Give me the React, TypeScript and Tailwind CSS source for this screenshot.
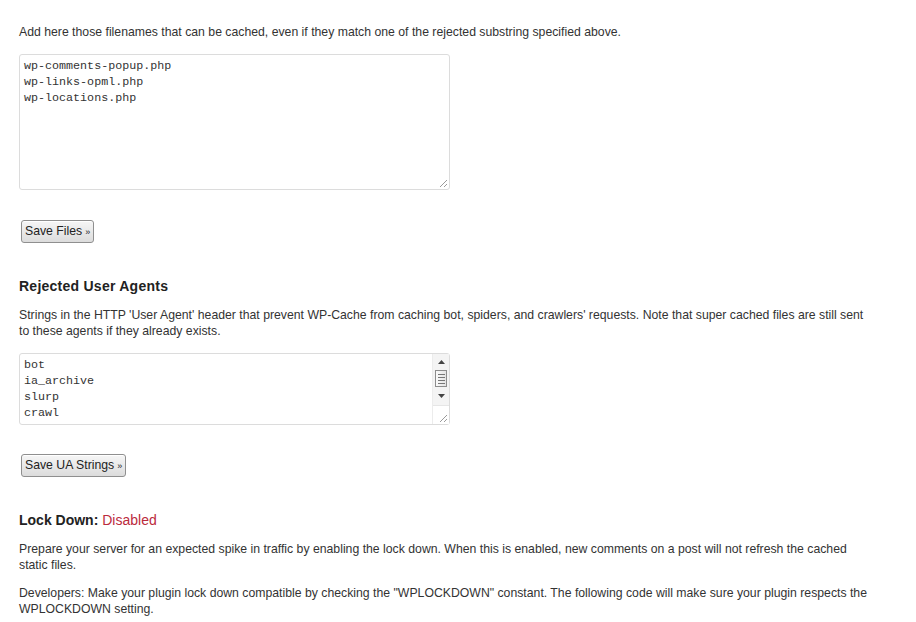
import React from 'react';

const sans = { fontFamily: '"Liberation Sans", Arial, sans-serif' };
const mono = { fontFamily: '"Liberation Mono", "DejaVu Sans Mono", monospace' };

function Grip() {
  return (
    <svg width="9" height="9" viewBox="0 0 9 9" className="block">
      <line x1="8" y1="1" x2="1" y2="8" stroke="#9a9a9a" strokeWidth="1" />
      <line x1="8" y1="5" x2="5" y2="8" stroke="#9a9a9a" strokeWidth="1" />
    </svg>
  );
}

function Button({ label }: { label: string }) {
  return (
    <button
      type="button"
      className="h-[23px] px-[3px] rounded-[3px] border border-[#8f8f8f] bg-gradient-to-b from-[#f6f6f6] to-[#dcdcdc] text-[12.25px] text-[#222] leading-none flex items-center gap-[3px] shadow-[inset_0_1px_0_#fff]"
      style={sans}
    >
      {label}
      <span className="text-[9px] mt-[2px]">»</span>
    </button>
  );
}

function TextBox({ lines, height, scroll }: { lines: string[]; height: number; scroll?: boolean }) {
  return (
    <div
      className="w-[431px] border border-[#dcdcdc] rounded-[3px] bg-white flex"
      style={{ height }}
    >
      <div
        className="flex-1 px-[4px] pt-[3px] text-[11.7px] leading-[16px] text-[#333] whitespace-pre overflow-hidden"
        style={mono}
      >
        {lines.join('\n')}
      </div>
      {scroll ? (
        <div className="w-[17px] flex flex-col bg-[#f4f4f4] border-l border-[#ececec]">
          <div className="h-[16px] flex items-center justify-center">
            <svg width="7" height="4" viewBox="0 0 7 4"><path d="M0 4 L3.5 0 L7 4 Z" fill="#444" /></svg>
          </div>
          <div className="mx-[2px] h-[17px] border border-[#8d8d8d] bg-gradient-to-r from-[#fafafa] to-[#e4e4e4] flex flex-col items-center justify-center gap-[2px]">
            <div className="w-[7px] h-px bg-[#777]" />
            <div className="w-[7px] h-px bg-[#777]" />
            <div className="w-[7px] h-px bg-[#777]" />
            <div className="w-[7px] h-px bg-[#777]" />
          </div>
          <div className="h-[18px] flex items-center justify-center">
            <svg width="7" height="4" viewBox="0 0 7 4"><path d="M0 0 L3.5 4 L7 0 Z" fill="#444" /></svg>
          </div>
          <div className="flex-1 bg-white border-t border-[#e6e6e6] flex items-end justify-end pr-[1px] pb-[1px]">
            <Grip />
          </div>
        </div>
      ) : (
        <div className="flex items-end pr-[1px] pb-[1px]">
          <Grip />
        </div>
      )}
    </div>
  );
}

export default function App() {
  return (
    <div className="w-[916px] h-[622px] bg-white pl-[19px] pr-[44px] text-[12.25px] text-[#333] overflow-hidden" style={sans}>
      <p className="pt-[24px] leading-[16px]">
        Add here those filenames that can be cached, even if they match one of the rejected substring specified above.
      </p>

      <div className="mt-[14px]">
        <TextBox height={136} lines={['wp-comments-popup.php', 'wp-links-opml.php', 'wp-locations.php']} />
      </div>

      <div className="mt-[30px] ml-[2px]">
        <Button label="Save Files" />
      </div>

      <h3 className="mt-[34px] text-[14px] font-bold text-[#222] leading-[18px] tracking-[0.25px]">Rejected User Agents</h3>

      <p className="mt-[12px] leading-[16px]">
        Strings in the HTTP 'User Agent' header that prevent WP-Cache from caching bot, spiders, and crawlers' requests. Note that super cached files are still sent to these agents if they already exists.
      </p>

      <div className="mt-[14px]">
        <TextBox height={72} scroll lines={['bot', 'ia_archive', 'slurp', 'crawl']} />
      </div>

      <div className="mt-[29px] ml-[2px]">
        <Button label="Save UA Strings" />
      </div>

      <h3 className="mt-[34px] text-[14px] leading-[18px]">
        <span className="font-bold text-[#222]">Lock Down:</span>{' '}
        <span className="text-[#bb2a3c]">Disabled</span>
      </h3>

      <p className="mt-[12px] leading-[16px]">
        Prepare your server for an expected spike in traffic by enabling the lock down. When this is enabled, new comments on a post will not refresh the cached static files.
      </p>

      <p className="mt-[12px] leading-[16px]">
        Developers: Make your plugin lock down compatible by checking the "WPLOCKDOWN" constant. The following code will make sure your plugin respects the WPLOCKDOWN setting.
      </p>
    </div>
  );
}
